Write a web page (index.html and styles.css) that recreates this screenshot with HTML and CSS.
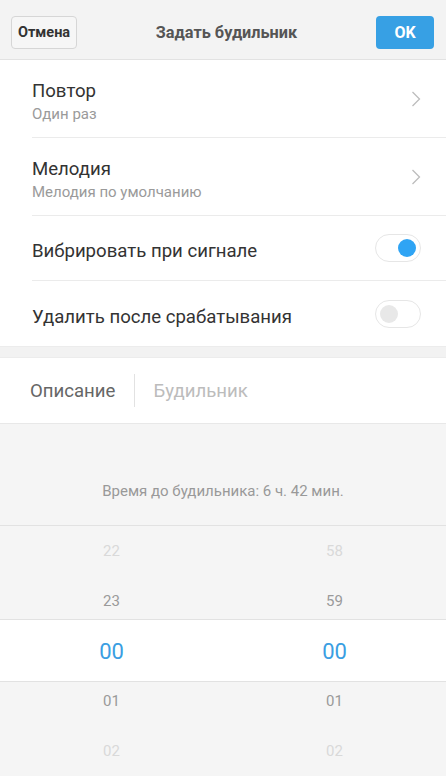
FILE: index.html
```html
<!DOCTYPE html>
<html lang="ru">
<head>
    <meta charset="UTF-8">
    <title>Задать будильник</title>
    <link rel="stylesheet" href="styles.css">
</head>
<body>

<header class="topbar">
    <button class="btn-cancel" type="button">Отмена</button>
    <h1 class="topbar-title">Задать будильник</h1>
    <button class="btn-ok" type="button">OK</button>
</header>

<section class="settings">
    <div class="row row-tall">
        <div class="row-text">
            <div class="row-title">Повтор</div>
            <div class="row-sub">Один раз</div>
        </div>
        <svg class="chevron" width="10" height="16" viewBox="0 0 10 16"><path d="M1.5 1 L8.5 8 L1.5 15" fill="none" stroke="#bdbdbd" stroke-width="1.3"/></svg>
    </div>
    <div class="row row-tall">
        <div class="row-text">
            <div class="row-title">Мелодия</div>
            <div class="row-sub">Мелодия по умолчанию</div>
        </div>
        <svg class="chevron" width="10" height="16" viewBox="0 0 10 16"><path d="M1.5 1 L8.5 8 L1.5 15" fill="none" stroke="#bdbdbd" stroke-width="1.3"/></svg>
    </div>
    <div class="row">
        <div class="row-title">Вибрировать при сигнале</div>
        <span class="switch on"><span class="knob"></span></span>
    </div>
    <div class="row">
        <div class="row-title">Удалить после срабатывания</div>
        <span class="switch"><span class="knob"></span></span>
    </div>
</section>

<div class="spacer"></div>

<section class="label-row">
    <span class="label-name">Описание</span>
    <span class="label-sep"></span>
    <span class="label-value">Будильник</span>
</section>

<main class="time-area">
    <p class="countdown">Время до будильника: 6 ч. 42 мин.</p>
    <div class="picker">
        <div class="picker-band"></div>
        <div class="picker-col">
            <div class="pick far">22</div>
            <div class="pick near">23</div>
            <div class="pick current">00</div>
            <div class="pick near">01</div>
            <div class="pick far">02</div>
        </div>
        <div class="picker-col">
            <div class="pick far">58</div>
            <div class="pick near">59</div>
            <div class="pick current">00</div>
            <div class="pick near">01</div>
            <div class="pick far">02</div>
        </div>
    </div>
</main>

</body>
</html>
```

FILE: styles.css
```css
body { margin: 0; font-family: Roboto, "Noto Sans", sans-serif; background: #f5f5f5; color: #333; height: 776px; overflow: hidden; display: flex; flex-direction: column; }

.topbar { height: 60px; background: #f3f3f3; border-bottom: 1px solid #e2e2e2; display: flex; align-items: center; justify-content: space-between; padding: 6px 12px 0 11px; box-sizing: border-box; flex-shrink: 0; }
.topbar-title { margin: 0; font-size: 16.3px; font-weight: bold; color: #555; }
.btn-cancel { width: 66px; height: 33px; padding: 0; background: #f6f6f6; border: 1px solid #d6d6d6; border-radius: 4px; font-family: inherit; font-size: 14.5px; font-weight: bold; color: #333; }
.btn-ok { width: 58px; height: 33px; padding: 0; background: #37a0e4; border: none; border-radius: 4px; font-family: inherit; font-size: 16px; font-weight: bold; color: #fff; }

.settings { background: #fff; flex-shrink: 0; }
.row { height: 65px; box-sizing: border-box; margin-left: 32px; padding-right: 25px; display: flex; align-items: center; justify-content: space-between; border-bottom: 1px solid #ebebeb; }
.row:last-child { border-bottom: none; }
.row-tall { height: 78px; }
.row > .row-text, .row > .row-title { margin-top: 6px; }
.row-title { font-size: 18.6px; color: #333; }
.row-sub { font-size: 15px; color: #9a9a9a; margin-top: 3px; }

.switch { width: 36px; height: 26px; border: 1px solid #e6e6e6; border-radius: 14px; background: #fff; display: flex; align-items: center; padding: 0 4px; }
.knob { width: 18px; height: 18px; border-radius: 50%; background: #e8e8e8; }
.switch.on { justify-content: flex-end; }
.switch.on .knob { background: #2fa4f4; }

.spacer { height: 10px; background: #f2f2f2; border-top: 1px solid #ececec; border-bottom: 1px solid #ececec; flex-shrink: 0; }

.label-row { height: 65px; background: #fff; display: flex; align-items: center; padding-left: 30px; border-bottom: 1px solid #e8e8e8; flex-shrink: 0; }
.label-name { font-size: 18.6px; color: #666; }
.label-sep { width: 1px; height: 33px; background: #e2e2e2; margin: 0 18px 0 19px; }
.label-value { font-size: 18.6px; color: #bcbcbc; }

.time-area { flex: 1; display: flex; flex-direction: column; }
.countdown { margin: 58px 0 0; height: 43px; line-height: 18px; text-align: center; font-size: 15px; color: #999; }
.picker { position: relative; flex: 1; display: flex; border-top: 1px solid #e2e2e2; }
.picker-band { position: absolute; left: 0; right: 0; top: 93px; height: 61px; background: #fff; border-top: 1px solid #e2e2e2; border-bottom: 1px solid #e2e2e2; }
.picker-col { position: relative; flex: 1; display: flex; flex-direction: column; }
.picker-col:first-of-type { border-right: 1px solid #e2e2e2; }
.pick { height: 50px; display: flex; align-items: center; justify-content: center; font-size: 15px; }
.pick.far { color: #d9d9d9; }
.pick.near { color: #9a9a9a; }
.pick.current { font-size: 22px; color: #3a9ee2; }
```
